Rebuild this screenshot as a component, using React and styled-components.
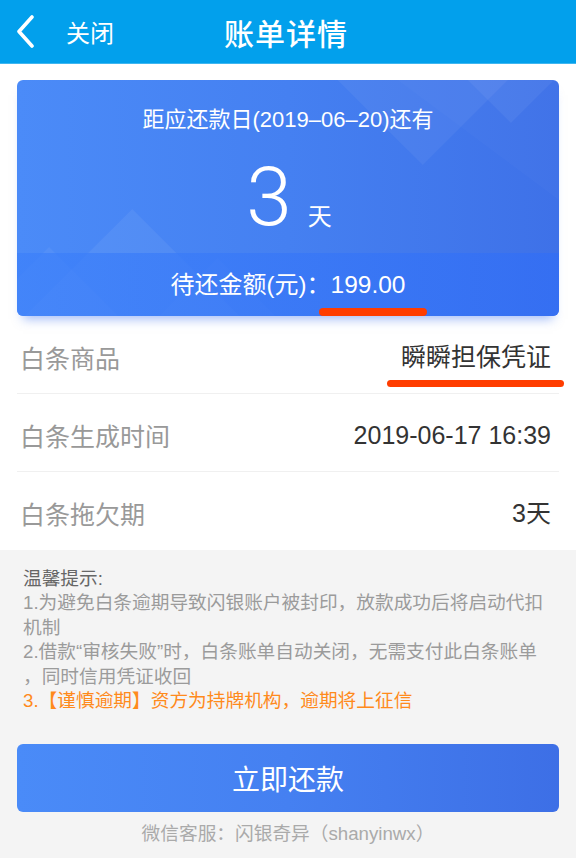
import React from "react";
import styled, { createGlobalStyle } from "styled-components";

const GlobalStyle = createGlobalStyle`
  html, body { margin: 0; padding: 0; background: #ffffff; }
  body { font-family: "Liberation Sans", "Noto Sans CJK SC", sans-serif; }
  * { box-sizing: border-box; }
`;

const Page = styled.div`
  width: 576px;
  min-height: 858px;
  display: flex;
  flex-direction: column;
  background: #f4f4f4;
`;

const Header = styled.header`
  height: 64px;
  background: #02a0ec;
  border-bottom: 1px solid #3fb6f0;
  display: grid;
  grid-template-columns: 1fr auto 1fr;
  align-items: center;
  color: #fff;
`;

const Back = styled.div`
  display: flex;
  align-items: center;
  gap: 30px;
  padding-left: 16px;
  font-family: "Noto Sans CJK SC", sans-serif;
  font-size: 24px;
  line-height: 30px;
`;

const Title = styled.h1`
  margin: 0;
  font-family: "Noto Sans CJK SC", sans-serif;
  font-size: 30px;
  font-weight: 500;
  line-height: 36px;
  letter-spacing: 1px;
  transform: translateX(-2px);
`;

const Main = styled.main`
  background: #fff;
  padding: 16px 17px 0;
`;

const Card = styled.section`
  position: relative;
  height: 236px;
  border-radius: 6px;
  background: linear-gradient(90deg, #4b8bf8 0%, #4580f1 50%, #3e71e8 100%);
  box-shadow: 0 9px 10px -6px rgba(70, 120, 240, 0.5);
  color: #fff;
  display: flex;
  flex-direction: column;
  overflow: hidden;
`;

const Deco = styled.svg`
  position: absolute;
  inset: 0;
  width: 100%;
  height: 100%;
  pointer-events: none;
`;

const CardTop = styled.div`
  position: relative;
  height: 173px;
  display: flex;
  flex-direction: column;
  align-items: center;
  padding-top: 26px;
`;

const DueText = styled.div`
  font-size: 22px;
  line-height: 28px;
`;

const DaysRow = styled.div`
  display: flex;
  align-items: baseline;
  gap: 16px;
  margin-top: 22px;
  transform: translateX(1px);
`;

const BigNum = styled.span`
  font-family: "Roboto", "Liberation Sans", sans-serif;
  font-weight: 300;
  font-size: 82px;
  line-height: 82px;
`;

const DayUnit = styled.span`
  font-family: "Noto Sans CJK SC", sans-serif;
  font-size: 24px;
`;

const CardBand = styled.div`
  position: relative;
  height: 63px;
  background: linear-gradient(90deg, rgba(60, 128, 250, 0.7) 0%, rgba(50, 110, 245, 0.75) 100%);
  display: flex;
  align-items: center;
  justify-content: center;
  font-size: 24px;
  line-height: 30px;
  padding-top: 1px;
`;

const Amount = styled.span`
  font-size: 24.5px;
`;

const Marked = styled.span`
  position: relative;
  &::after {
    content: "";
    position: absolute;
    left: ${(p) => p.$left}px;
    right: ${(p) => p.$right}px;
    top: ${(p) => p.$top}px;
    height: ${(p) => p.$h}px;
    border-radius: 4px;
    background: #ff3d00;
  }
`;

const Rows = styled.div`
  display: flex;
  flex-direction: column;
`;

const Row = styled.div`
  height: 78px;
  display: flex;
  align-items: center;
  justify-content: space-between;
  padding: 4px 8px 0 3px;
  border-bottom: ${(p) => (p.$last ? "none" : "1px solid #f0f0f0")};
  font-size: 25px;
  line-height: 30px;
`;

const Label = styled.span`
  color: #999;
  font-family: "Noto Sans CJK SC", sans-serif;
`;

const Value = styled.span`
  color: #333;
`;

const Tips = styled.section`
  padding: 17px 23px 0;
  font-size: 18.7px;
  line-height: 24.4px;
  color: #9b9b9b;
  white-space: nowrap;
`;

const TipTitle = styled.div`
  color: #666;
`;

const TipLine = styled.div`
  color: ${(p) => (p.$warn ? "#ff8a1c" : "#9b9b9b")};
`;

const PayButton = styled.button`
  margin: 31px 17px 0;
  height: 68px;
  border: none;
  border-radius: 6px;
  background: linear-gradient(90deg, #4a8bf8 0%, #4580f1 50%, #3d6fe6 100%);
  color: #fff;
  font-family: "Noto Sans CJK SC", sans-serif;
  font-size: 28px;
  line-height: 34px;
  padding: 0;
  cursor: pointer;
`;

const Footer = styled.div`
  margin-top: 10px;
  text-align: center;
  font-size: 18.7px;
  line-height: 24px;
  color: #aaa;
`;

function Chevron() {
  return (
    <svg width="20" height="34" viewBox="0 0 20 34" fill="none">
      <polyline
        points="16,2 3,16.5 16,31"
        stroke="#fff"
        strokeWidth="3.6"
        strokeLinecap="round"
        strokeLinejoin="round"
      />
    </svg>
  );
}

export default function App() {
  return (
    <Page>
      <GlobalStyle />
      <Header>
        <Back>
          <Chevron />
          <span>关闭</span>
        </Back>
        <Title>账单详情</Title>
        <div />
      </Header>
      <Main>
        <Card>
          <Deco viewBox="0 0 541 236" preserveAspectRatio="none">
            <polygon points="115,129 8,236 222,236" fill="#ffffff" opacity="0.06" />
            <polygon points="32,167 -37,236 101,236" fill="#ffffff" opacity="0.05" />
            <polygon points="200,178 142,236 258,236" fill="#ffffff" opacity="0.04" />
            <polygon points="320,0 490,0 405,85" fill="#ffffff" opacity="0.05" />
            <polygon points="450,0 536,0 493,43" fill="#ffffff" opacity="0.05" />
            <polygon points="380,0 541,0 541,120" fill="#ffffff" opacity="0.02" />
          </Deco>
          <CardTop>
            <DueText>距应还款日(2019–06–20)还有</DueText>
            <DaysRow>
              <BigNum>3</BigNum>
              <DayUnit>天</DayUnit>
            </DaysRow>
          </CardTop>
          <CardBand>
            待还金额(元)：
            <Amount>
              <Marked $left={-12} $right={-22} $top={37} $h={8}>
                199.00
              </Marked>
            </Amount>
          </CardBand>
        </Card>
        <Rows>
          <Row>
            <Label>白条商品</Label>
            <Value>
              <Marked $left={-14} $right={-13} $top={37} $h={7}>
                瞬瞬担保凭证
              </Marked>
            </Value>
          </Row>
          <Row>
            <Label>白条生成时间</Label>
            <Value>2019-06-17 16:39</Value>
          </Row>
          <Row $last>
            <Label>白条拖欠期</Label>
            <Value>3天</Value>
          </Row>
        </Rows>
      </Main>
      <Tips>
        <TipTitle>温馨提示:</TipTitle>
        <TipLine>1.为避免白条逾期导致闪银账户被封印，放款成功后将启动代扣</TipLine>
        <TipLine>机制</TipLine>
        <TipLine>2.借款“审核失败”时，白条账单自动关闭，无需支付此白条账单</TipLine>
        <TipLine>，同时信用凭证收回</TipLine>
        <TipLine $warn>3.【谨慎逾期】资方为持牌机构，逾期将上征信</TipLine>
      </Tips>
      <PayButton>立即还款</PayButton>
      <Footer>微信客服：闪银奇异（shanyinwx）</Footer>
    </Page>
  );
}
